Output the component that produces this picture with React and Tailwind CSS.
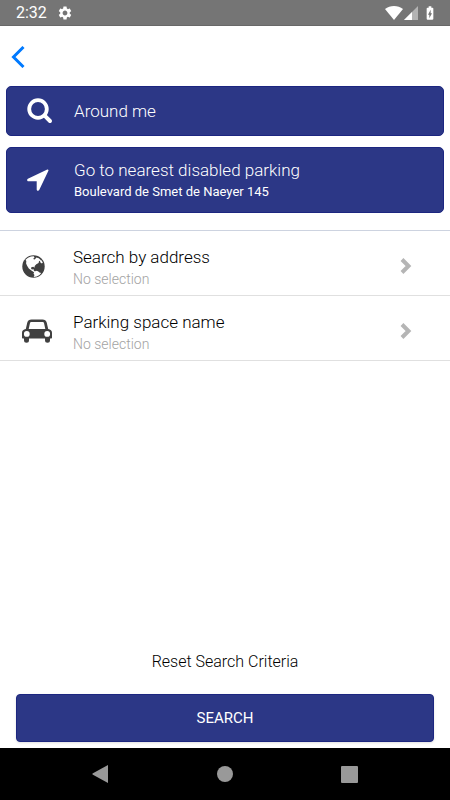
import { useState } from 'react';
import { MdSettings, MdBatteryChargingFull } from 'react-icons/md';

const SearchIcon = () => (
  <svg viewBox="0 0 26 26" className="h-[26px] w-[26px]" fill="none" stroke="currentColor" strokeLinecap="round">
    <circle cx="11" cy="11" r="8.8" strokeWidth="3.8" />
    <path d="M17.6 17.6 23 23" strokeWidth="4" />
  </svg>
);

const ArrowIcon = () => (
  <svg viewBox="0 0 22 22" className="h-[22px] w-[22px]" fill="currentColor">
    <path d="M20.3.6.9 9.800C-.3 10.400 0 12.300 1.500 12.300H9.700v8.200c0 1.500 1.900 1.800 2.500.6L21.400 1.700c.3-.7-.4-1.400-1.100-1.100z" />
  </svg>
);

const GlobeIcon = () => (
  <svg viewBox="0 0 23 23" className="h-[23px] w-[23px]">
    <circle cx="11.500" cy="11.500" r="11.200" fill="#404040" />
    <path
      fill="#fff"
      d="M3.500 4.800 6 2.800l3-1.300 2.700-.3.800 1.400-1.400 1.300 1.700.5 1.600-2 2.400.8 2.200 2-2 1.100-.4 1.700-2.300 1.200-1.600 1.900-.2 1.700-1.200-1-2 .4-.2 1.700 1.300.7 1.100-.7.3 1.700 1.600 1.400-1 .5-3-2-2.600-2-1.700-2.700-1-2.300.2-2.500z"
    />
    <path fill="#fff" d="m12.200 17 1.800-1.200 2 .5 1.500 1.300 1.700.3-1.700 2-2.800 1.500-3 .5.8-1.900-1-1.300z" />
    <path fill="#fff" d="m17.800 5.600 1.400-.6 1.600 2.600-.9.900-1.500-.9z" />
  </svg>
);

const CarIcon = () => (
  <svg viewBox="0 0 30 24" className="h-6 w-[30px]">
    <path
      fill="#404040"
      fillRule="evenodd"
      d="M9.500.5h11c2.200 0 3.700 1 4.200 3L26.200 10C28.500 10.200 30 11.700 30 13.700v4.800c0 .6-.4 1-1 1h-1v1.700a2.500 2.500 0 0 1-5 0v-1.700H7v1.700a2.500 2.500 0 0 1-5 0v-1.700H1c-.6 0-1-.4-1-1v-4.800c0-2 1.500-3.500 3.800-3.700L5.300 3.500C5.800 1.500 7.300.5 9.500.5zM9.200 3c-.6 0-1 .3-1.200.9L6.700 10h16.600L22 3.900c-.2-.6-.6-.9-1.200-.9zM4.800 12a2.900 2.900 0 1 0 0 5.800 2.900 2.900 0 0 0 0-5.800zM25.200 12a2.900 2.900 0 1 0 0 5.800 2.900 2.900 0 0 0 0-5.800z"
    />
  </svg>
);

const ChevronRight = () => (
  <svg viewBox="0 0 12 16" className="h-4 w-3" fill="none" stroke="#b5b5b5" strokeWidth="4">
    <path d="m2 1.500 6.500 6.500L2 14.500" />
  </svg>
);

const StatusBar = () => (
  <header className="flex h-[26px] items-center justify-between border-b border-[#686868] bg-[#757575] pr-3 pl-4 text-white">
    <div className="flex items-center gap-[10px]">
      <span className="text-base">2:32</span>
      <MdSettings size={16} />
    </div>
    <div className="flex items-center">
      <svg viewBox="0 0 18 14" className="h-[14px] w-[18px]" fill="currentColor">
        <path d="M9 14 0 3c5-4 13-4 18 0z" />
      </svg>
      <svg viewBox="0 0 14 14" className="ml-[1px] h-[14px] w-[14px]" fill="currentColor">
        <path d="M14 0v14H0z" opacity=".45" />
        <path d="M8 6v8H0z" />
      </svg>
      <MdBatteryChargingFull size={16} className="ml-1" />
    </div>
  </header>
);

const ActionButton = ({ icon, title, subtitle }) => (
  <button className="flex min-h-[50px] w-full items-center rounded-[5px] border border-[#1c2680] bg-[#2c3786] py-[10px] text-left text-white">
    <span className="flex w-[67px] shrink-0 pl-5">{icon}</span>
    <span className="flex flex-col">
      <span className="text-[17px] leading-6 font-light">{title}</span>
      {subtitle && <span className="text-[13px] leading-5">{subtitle}</span>}
    </span>
  </button>
);

const CriteriaRow = ({ icon, title, value }) => (
  <li className="border-b border-[#e0e0e0]">
    <button className="flex w-full items-center pt-3 pr-[38px] pb-[6px] pl-[22px] text-left">
      <span className="flex w-[51px] shrink-0">{icon}</span>
      <span className="flex flex-1 flex-col pt-[2px]">
        <span className="text-[17px] leading-6 font-light text-black">{title}</span>
        <span className="text-[14px] leading-5 font-light text-[#a3a3a3]">{value || 'No selection'}</span>
      </span>
      <ChevronRight />
    </button>
  </li>
);

const App = () => {
  const [criteria, setCriteria] = useState({ address: '', name: '' });

  return (
    <div className="flex min-h-screen flex-col bg-white font-['Roboto',sans-serif]">
      <StatusBar />

      <main className="flex flex-1 flex-col">
        <nav className="flex h-[60px] items-center px-[11px] pt-[2px]">
          <button aria-label="Back">
            <svg viewBox="0 0 14 22" className="h-[22px] w-[14px]" fill="none" stroke="#007aff" strokeWidth="3">
              <path d="M12.500 1 2.500 11l10 10" />
            </svg>
          </button>
        </nav>

        <div className="flex flex-col gap-[11px] px-[6px] pb-[17px]">
          <ActionButton icon={<SearchIcon />} title="Around me" />
          <ActionButton
            icon={<ArrowIcon />}
            title="Go to nearest disabled parking"
            subtitle="Boulevard de Smet de Naeyer 145"
          />
        </div>

        <ul className="border-t border-[#cdd3e0]">
          <CriteriaRow icon={<GlobeIcon />} title="Search by address" value={criteria.address} />
          <CriteriaRow icon={<CarIcon />} title="Parking space name" value={criteria.name} />
        </ul>

        <div className="mt-auto flex flex-col items-center gap-5 px-4 pb-[6px]">
          <button
            className="text-base font-light text-black"
            onClick={() => setCriteria({ address: '', name: '' })}
          >
            Reset Search Criteria
          </button>
          <button className="h-12 w-full rounded-[4px] border border-[#1c2680] bg-[#2c3786] text-[15px] text-white shadow">
            SEARCH
          </button>
        </div>
      </main>

      <footer className="flex h-[52px] items-center justify-around bg-black px-[38px]">
        <button aria-label="Navigate back">
          <svg viewBox="0 0 18 18" className="h-[18px] w-[18px]" fill="#999999">
            <path d="M16 0v18L.5 9.500v-1z" />
          </svg>
        </button>
        <button aria-label="Home" className="h-4 w-4 rounded-full bg-[#999999]" />
        <button aria-label="Recent apps" className="h-[17px] w-[17px] rounded-[1px] bg-[#999999]" />
      </footer>
    </div>
  );
};

export default App;
